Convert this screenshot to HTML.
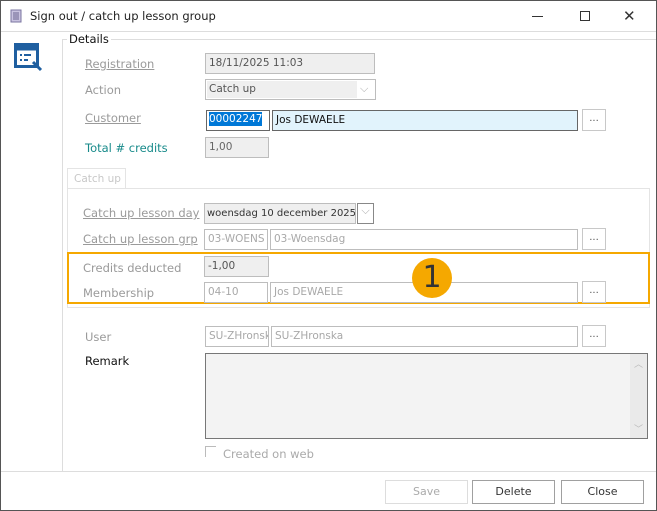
<!DOCTYPE html>
<html><head><style>
*{box-sizing:border-box;margin:0;padding:0}
body{width:657px;height:511px;background:#fff;font-family:"DejaVu Sans","Liberation Sans",sans-serif;font-size:11px;position:relative;overflow:hidden}
.a{position:absolute;white-space:nowrap}
.lbl{position:absolute;color:#9a9a9a;font-size:11.5px;white-space:nowrap}
.u{text-decoration:underline}
.box{position:absolute;border:1px solid #bdbdbd;height:21px;padding:3px 3px;color:#a8a8a8;white-space:nowrap;overflow:hidden;background:#fff;font-size:10.5px}
.g{background:#efefef}
.btn{position:absolute;border:1px solid #c8c8c8;width:24px;height:22px;text-align:center;color:#555;font-size:10px;line-height:18px}
.fb{position:absolute;top:480px;height:24px;border:1px solid #a0a0a0;text-align:center;line-height:22px;font-size:11px;color:#333;width:83px}
</style></head><body>
<div class="a" style="left:0;top:0;width:657px;height:511px;border:1px solid #555"></div>
<div class="a" style="left:1px;top:31px;width:655px;height:1px;background:#ddd"></div>
<svg class="a" style="left:10px;top:9px" width="13" height="14"><rect x="1" y="1" width="10" height="12" fill="#c9c3e0" stroke="#7a74a0"/><path d="M3 4h6M3 6h6M3 8h6M3 10h6" stroke="#6b6590"/></svg>
<div class="a" style="left:30px;top:9px;font-size:11.5px;color:#222">Sign out / catch up lesson group</div>
<div class="a" style="left:532px;top:16px;width:11px;height:1px;background:#333"></div>
<div class="a" style="left:580px;top:11px;width:10px;height:10px;border:1px solid #333"></div>
<div class="a" style="left:623px;top:7px;font-size:15px;color:#333">✕</div>
<svg class="a" style="left:14px;top:43px" width="30" height="30"><rect x="1.5" y="1.5" width="22" height="22" fill="none" stroke="#1f5fa0" stroke-width="3"/><rect x="1.5" y="1.5" width="22" height="6" fill="#1f5fa0"/><path d="M6 12h2M10 12h7M6 17h2M10 17h4" stroke="#1f5fa0" stroke-width="2"/><path d="M19 19l8 8" stroke="#1f5fa0" stroke-width="3"/></svg>
<div class="a" style="left:62px;top:39px;width:1px;height:432px;background:#ddd"></div>
<div class="a" style="left:62px;top:39px;width:594px;height:1px;background:#ddd"></div>
<div class="a" style="left:1px;top:471px;width:655px;height:1px;background:#ddd"></div>
<div class="a" style="left:67px;top:32px;background:#fff;padding:0 2px;font-size:11.5px;color:#111">Details</div>
<div class="lbl u" style="left:85px;top:57px">Registration</div>
<div class="box g" style="left:205px;top:53px;width:170px;color:#555">18/11/2025 11:03</div>
<div class="lbl" style="left:85px;top:83px">Action</div>
<div class="box" style="left:205px;top:79px;width:171px;color:#555;padding:0"><div style="background:#efefef;width:150px;height:17px;margin:1px;padding:2px">Catch up</div></div>
<div class="a" style="left:360px;top:82px;color:#aaa">⌵</div>
<div class="lbl u" style="left:85px;top:111px">Customer</div>
<div class="box" style="left:206px;top:110px;width:64px;border-color:#666;padding:2px;color:#fff"><span style="background:#0078d7;color:#fff;padding:1px 0">00002247</span></div>
<div class="box" style="left:272px;top:110px;width:306px;background:#e1f3fc;color:#111;border-color:#666">Jos DEWAELE</div>
<div class="btn" style="left:582px;top:109px">...</div>
<div class="lbl" style="left:85px;top:141px;color:#178a8a">Total # credits</div>
<div class="box g" style="left:205px;top:137px;width:64px;color:#666">1,00</div>
<div class="a" style="left:67px;top:168px;width:59px;height:21px;border:1px solid #e4e4e4;border-bottom:none;color:#c8c8c8;padding:4px 6px;font-size:10.5px">Catch up</div>
<div class="a" style="left:67px;top:188px;width:583px;height:120px;border:1px solid #e4e4e4"></div>
<div class="lbl u" style="left:83px;top:206px">Catch up lesson day</div>
<div class="box g" style="left:204px;top:203px;width:152px;color:#333;font-size:10px;padding:4px 2px">woensdag 10 december 2025</div>
<div class="a" style="left:357px;top:203px;width:17px;height:21px;border:1px solid #888;color:#aaa;text-align:center">⌵</div>
<div class="lbl u" style="left:83px;top:232px">Catch up lesson grp</div>
<div class="box" style="left:204px;top:229px;width:64px">03-WOENS</div>
<div class="box" style="left:270px;top:229px;width:308px">03-Woensdag</div>
<div class="btn" style="left:582px;top:228px">...</div>
<div class="a" style="left:67px;top:252px;width:583px;height:52px;border:2px solid #f5a800"></div>
<div class="lbl" style="left:83px;top:261px">Credits deducted</div>
<div class="box g" style="left:204px;top:256px;width:65px;color:#555">-1,00</div>
<div class="lbl" style="left:83px;top:286px">Membership</div>
<div class="box" style="left:204px;top:282px;width:64px">04-10</div>
<div class="box" style="left:270px;top:282px;width:308px">Jos DEWAELE</div>
<div class="btn" style="left:582px;top:281px">...</div>
<div class="a" style="left:412px;top:258px;width:40px;height:40px;border-radius:50%;background:#f5a800;color:#333;font-size:30px;text-align:center;line-height:40px">1</div>
<div class="lbl" style="left:85px;top:330px">User</div>
<div class="box" style="left:205px;top:326px;width:64px">SU-ZHronska</div>
<div class="box" style="left:271px;top:326px;width:307px">SU-ZHronska</div>
<div class="btn" style="left:582px;top:325px">...</div>
<div class="lbl" style="left:85px;top:354px;color:#111">Remark</div>
<div class="a" style="left:205px;top:353px;width:443px;height:86px;border:1px solid #777;background:#f3f3f3"></div>
<div class="a" style="left:630px;top:354px;width:17px;height:84px;background:#eaeaea;color:#bbb;text-align:center;font-size:9px"><div style="margin-top:3px">︿</div><div style="margin-top:52px">﹀</div></div>
<div class="a" style="left:205px;top:446px;width:11px;height:11px;border:1px solid #bbb;border-right:none;border-bottom:none"></div>
<div class="lbl" style="left:223px;top:447px;color:#aaa">Created on web</div>
<div class="fb" style="left:385px;color:#aaa;border-color:#ddd">Save</div>
<div class="fb" style="left:472px">Delete</div>
<div class="fb" style="left:561px">Close</div>
</body></html>
